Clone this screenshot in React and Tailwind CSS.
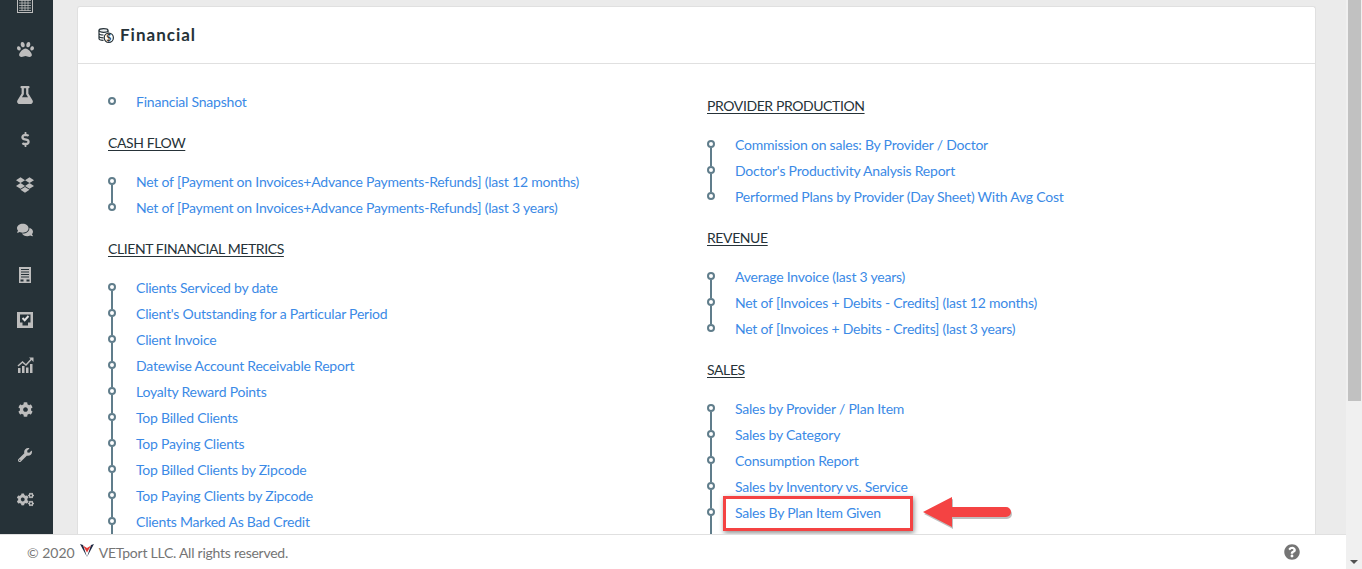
import {
  FaPaw, FaFlask, FaDollarSign, FaDropbox, FaComments, FaCog, FaWrench, FaCogs, FaQuestionCircle,
} from "react-icons/fa";

const font = "font-['Lato','Noto_Sans',sans-serif]";

function TableIcon() {
  return (
    <svg width="16" height="16" viewBox="0 0 16 16" fill="none" stroke="#bdbdbd">
      <rect x="0.5" y="0.5" width="15" height="15" />
      <path d="M2 3.5h12M2 6h12M2 8.5h12M2 11h12M2 13.5h12M5 2v12M8 2v12M11 2v12" strokeWidth="0.8" />
    </svg>
  );
}

function ReceiptIcon() {
  return (
    <svg width="12" height="16" viewBox="0 0 12 16" fill="#bdbdbd">
      <path d="M0 0h12v16H0z" />
      <path d="M2 2h8v1H2zM2 4.5h8v1H2zM2 7h8v1H2zM2 9.5h8v1H2z" fill="#263238" />
      <path d="M1.5 12.5h3v2h-3zM7.5 12.5h3v2h-3z" fill="#263238" />
    </svg>
  );
}

function CheckIcon() {
  return (
    <svg width="16" height="16" viewBox="0 0 16 16">
      <rect width="16" height="16" fill="#bdbdbd" />
      <path d="M3 2.5h10.5v8H11v3H5.500v-3H3z" fill="#263238" />
      <path d="M5.500 6l2.200 2.200L11.500 4" fill="none" stroke="#e0e0e0" strokeWidth="2" />
    </svg>
  );
}

function ChartIcon() {
  return (
    <svg width="17" height="16" viewBox="0 0 17 16" fill="#bdbdbd">
      <path d="M1 11h2.500v5H1zM5 9h2.500v7H5zM9 10.500h2.500V16H9zM13 7h2.500v9H13z" />
      <path d="M1 9l4.500-4 3.500 3 5.500-6" fill="none" stroke="#bdbdbd" strokeWidth="1.500" />
      <path d="M12 0.500h4.500V5z" />
    </svg>
  );
}

const sideIcons = [
  <TableIcon />,
  <FaPaw size={17} />,
  <FaFlask size={18} />,
  <FaDollarSign size={15} />,
  <FaDropbox size={18} />,
  <FaComments size={16} />,
  <ReceiptIcon />,
  <CheckIcon />,
  <ChartIcon />,
  <FaCog size={15} />,
  <FaWrench size={14} />,
  <FaCogs size={17} />,
];

function FinanceIcon() {
  return (
    <svg width="16" height="15" viewBox="0 0 16 15" fill="none" stroke="#263238" strokeWidth="1.200">
      <ellipse cx="5.500" cy="2.500" rx="4.500" ry="1.800" fill="#eceff1" />
      <path d="M1 2.500v8c0 1 2 1.800 4.500 1.800M1 5.200c0 1 2 1.800 4.500 1.800M1 8c0 1 2 1.800 4.500 1.800M10 2.500v2" />
      <circle cx="10.800" cy="9.800" r="4.600" fill="#fff" />
      <text x="10.800" y="12.800" fontSize="8.500" fontWeight="700" textAnchor="middle" fill="#263238" stroke="none">$</text>
    </svg>
  );
}

function Logo() {
  return (
    <svg width="14" height="14" viewBox="0 0 14 14">
      <path d="M0 0l3 1 4 12z" fill="#1f2a44" />
      <path d="M14 0l-3 1-4 12z" fill="#1f2a44" />
      <path d="M3 1.500l4 2.500 4-2.500-4 7z" fill="#e53935" />
    </svg>
  );
}

function Row({ label, first, last }) {
  return (
    <div className="flex h-[26px] items-center">
      <div className="flex h-full w-[28px] shrink-0 flex-col items-start">
        <div className={`ml-[3px] h-[9px] w-[2px] ${first ? "" : "bg-[#607d8b]"}`} />
        <div className="h-[8px] w-[8px] rounded-full border-2 border-[#607d8b] bg-white" />
        <div className={`ml-[3px] h-[9px] w-[2px] ${last ? "" : "bg-[#607d8b]"}`} />
      </div>
      <a className="text-[14px] tracking-[-0.22px] text-[#3b8ae6]">{label}</a>
    </div>
  );
}

function Group({ title, items, open }) {
  return (
    <div>
      {title && (
        <div className="mt-[18px] mb-[14px] h-[22px] text-[14px] leading-[22px] tracking-[-0.4px] text-[#263238]">
          <span className="underline underline-offset-2">{title}</span>
        </div>
      )}
      {items.map((label, i) => (
        <Row key={label} label={label} first={i === 0} last={!open && i === items.length - 1} />
      ))}
    </div>
  );
}

export default function App() {
  return (
    <div className={`flex h-[569px] w-[1362px] overflow-hidden bg-white ${font}`}>
      <div className="flex min-w-0 flex-1 flex-col">
        <div className="flex min-h-0 flex-1">
          {/* Sidebar */}
          <div className="w-[53px] shrink-0 overflow-hidden bg-[#263238] text-[#bdbdbd]">
            <div className="-mt-[18px]">
              {sideIcons.map((icon, i) => (
                <div key={i} className="flex h-[45px] w-[50px] items-center justify-center">{icon}</div>
              ))}
            </div>
          </div>

          {/* Content */}
          <div className="min-w-0 flex-1 overflow-hidden bg-[#ebebeb] pt-[6px] pr-[30px] pl-[24px]">
            <div className="rounded-t-[3px] border border-b-0 border-[#e0e0e0] bg-white">
              <div className="flex h-[57px] items-center gap-[6px] border-b border-[#e0e0e0] pl-[20px]">
                <FinanceIcon />
                <span className="text-[17px] font-bold tracking-[1px] text-[#263238]">Financial</span>
              </div>
              <div className="grid grid-cols-[599px_1fr] pl-[30px]">
                <div className="pt-[24px]">
                  <Group items={["Financial Snapshot"]} />
                  <Group
                    title="CASH FLOW"
                    items={[
                      "Net of [Payment on Invoices+Advance Payments-Refunds] (last 12 months)",
                      "Net of [Payment on Invoices+Advance Payments-Refunds] (last 3 years)",
                    ]}
                  />
                  <Group
                    title="CLIENT FINANCIAL METRICS"
                    open
                    items={[
                      "Clients Serviced by date",
                      "Client's Outstanding for a Particular Period",
                      "Client Invoice",
                      "Datewise Account Receivable Report",
                      "Loyalty Reward Points",
                      "Top Billed Clients",
                      "Top Paying Clients",
                      "Top Billed Clients by Zipcode",
                      "Top Paying Clients by Zipcode",
                      "Clients Marked As Bad Credit",
                    ]}
                  />
                </div>
                <div className="relative pt-[13px]">
                  <Group
                    title="PROVIDER PRODUCTION"
                    items={[
                      "Commission on sales: By Provider / Doctor",
                      "Doctor's Productivity Analysis Report",
                      "Performed Plans by Provider (Day Sheet) With Avg Cost",
                    ]}
                  />
                  <Group
                    title="REVENUE"
                    items={[
                      "Average Invoice (last 3 years)",
                      "Net of [Invoices + Debits - Credits] (last 12 months)",
                      "Net of [Invoices + Debits - Credits] (last 3 years)",
                    ]}
                  />
                  <Group
                    title="SALES"
                    open
                    items={[
                      "Sales by Provider / Plan Item",
                      "Sales by Category",
                      "Consumption Report",
                      "Sales by Inventory vs. Service",
                      "Sales By Plan Item Given",
                      " ",
                    ]}
                  />
                  {/* Annotation */}
                  <div className="absolute top-[432px] left-[16px] h-[35px] w-[190px] border-[3px] border-[#f44343] shadow-[1px_2px_5px_rgba(0,0,0,0.45)]" />
                  <svg className="absolute top-[432px] left-[215px]" width="96" height="36" viewBox="0 0 96 36">
                    <path d="M1 16L30 1v10h54a5 5 0 0 1 0 10H30v10z" fill="#000" opacity="0.25" transform="translate(1 2)" />
                    <path d="M1 16L30 1v10h54a5 5 0 0 1 0 10H30v10z" fill="#f44343" />
                  </svg>
                </div>
              </div>
            </div>
          </div>
        </div>

        {/* Footer */}
        <div className="flex h-[35px] shrink-0 items-center border-t border-[#e0e0e0] bg-white pr-[46px] pl-[27px] text-[14px] text-[#757575]">
          <span>© 2020</span>
          <span className="mr-[5px] ml-[5px] -mt-[3px]"><Logo /></span>
          <span className="tracking-[-0.25px]">VETport LLC. All rights reserved.</span>
          <span className="ml-auto"><FaQuestionCircle size={16} /></span>
        </div>
      </div>

      {/* Scrollbar */}
      <div className="flex w-[16px] shrink-0 flex-col items-start bg-[#f0f0f0]">
        <div className="ml-[2px] h-[401px] w-[13px] bg-[#c1c1c1]" />
        <div className="mt-auto mb-[5px] ml-[4px] h-0 w-0 border-x-[4px] border-t-[4px] border-x-transparent border-t-[#505050]" />
      </div>
    </div>
  );
}
